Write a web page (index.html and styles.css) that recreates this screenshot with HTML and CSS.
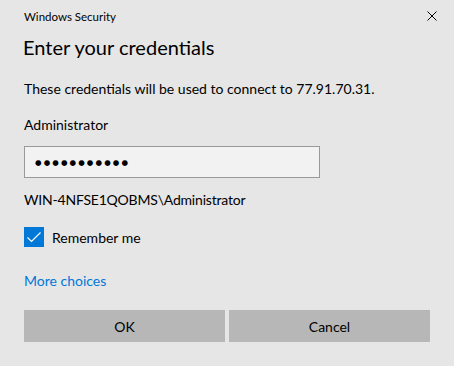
FILE: index.html
```html
<!DOCTYPE html>
<html lang="en">
<head>
  <meta charset="UTF-8" />
  <title>Windows Security</title>
  <link rel="stylesheet" href="styles.css">
</head>
<body>
  <div class="dialog">
    <div class="titlebar">
      <span class="app-name">Windows Security</span>
      <svg class="close" width="10" height="10" viewBox="0 0 10 10">
        <path d="M0.5 0.5 L9.5 9.5 M9.5 0.5 L0.5 9.5" stroke="#000" stroke-width="1" fill="none" />
      </svg>
    </div>

    <h1 class="heading">Enter your credentials</h1>
    <p class="desc">These credentials will be used to connect to 77.91.70.31.</p>
    <p class="user">Administrator</p>

    <div class="password">
      <span class="dots">●●●●●●●●●●●</span>
    </div>

    <p class="domain">WIN-4NFSE1QOBMS\Administrator</p>

    <label class="remember">
      <span class="checkbox">
        <svg width="20" height="20" viewBox="0 0 20 20">
          <path d="M3.5 10.5 L7.5 14.5 L16.5 5.5" stroke="#fff" stroke-width="1.2" fill="none" />
        </svg>
      </span>
      <span>Remember me</span>
    </label>

    <a class="more" href="#">More choices</a>

    <div class="buttons">
      <button class="btn">OK</button>
      <button class="btn">Cancel</button>
    </div>
  </div>
</body>
</html>
```

FILE: styles.css
```css
body {
  margin: 0;
  background-color: #e6e6e6;
  font-family: Lato, 'Open Sans', sans-serif;
  color: #000;
}
.dialog {
  width: 454px;
  height: 366px;
  padding: 0 24px;
  box-sizing: border-box;
}
.titlebar {
  height: 32px;
  display: flex;
  align-items: center;
  justify-content: space-between;
}
.app-name {
  font-size: 11.5px;
}
.close {
  margin-right: -7px;
}
.heading {
  font-size: 20px;
  font-weight: normal;
  line-height: 28px;
  margin: 1px 0 0 -1px;
}
.desc {
  font-size: 14px;
  line-height: 20px;
  margin: 18px 0 0;
}
.user {
  font-size: 14px;
  line-height: 20px;
  margin: 16px 0 0;
}
.password {
  width: 296px;
  height: 32px;
  box-sizing: border-box;
  margin-top: 11px;
  border: 1px solid #999;
  background-color: #f2f2f2;
  display: flex;
  align-items: center;
  padding-left: 10px;
}
.dots {
  font-family: 'DejaVu Sans', sans-serif;
  font-size: 7.5px;
  letter-spacing: 2.1px;
}
.domain {
  font-size: 14px;
  line-height: 20px;
  margin: 12px 0 0;
  letter-spacing: -0.2px;
}
.remember {
  display: flex;
  align-items: center;
  gap: 8px;
  margin-top: 17px;
  font-size: 14px;
}
.checkbox {
  width: 20px;
  height: 20px;
  background-color: #0078d7;
  display: block;
}
.checkbox svg {
  display: block;
}
.more {
  display: block;
  font-size: 14px;
  line-height: 20px;
  margin-top: 24px;
  color: #0078d7;
  text-decoration: none;
}
.buttons {
  display: flex;
  gap: 4px;
  margin-top: 19px;
}
.btn {
  width: 201px;
  height: 32px;
  border: none;
  background-color: #b7b7b7;
  font-family: inherit;
  font-size: 14px;
  color: #000;
}
```
